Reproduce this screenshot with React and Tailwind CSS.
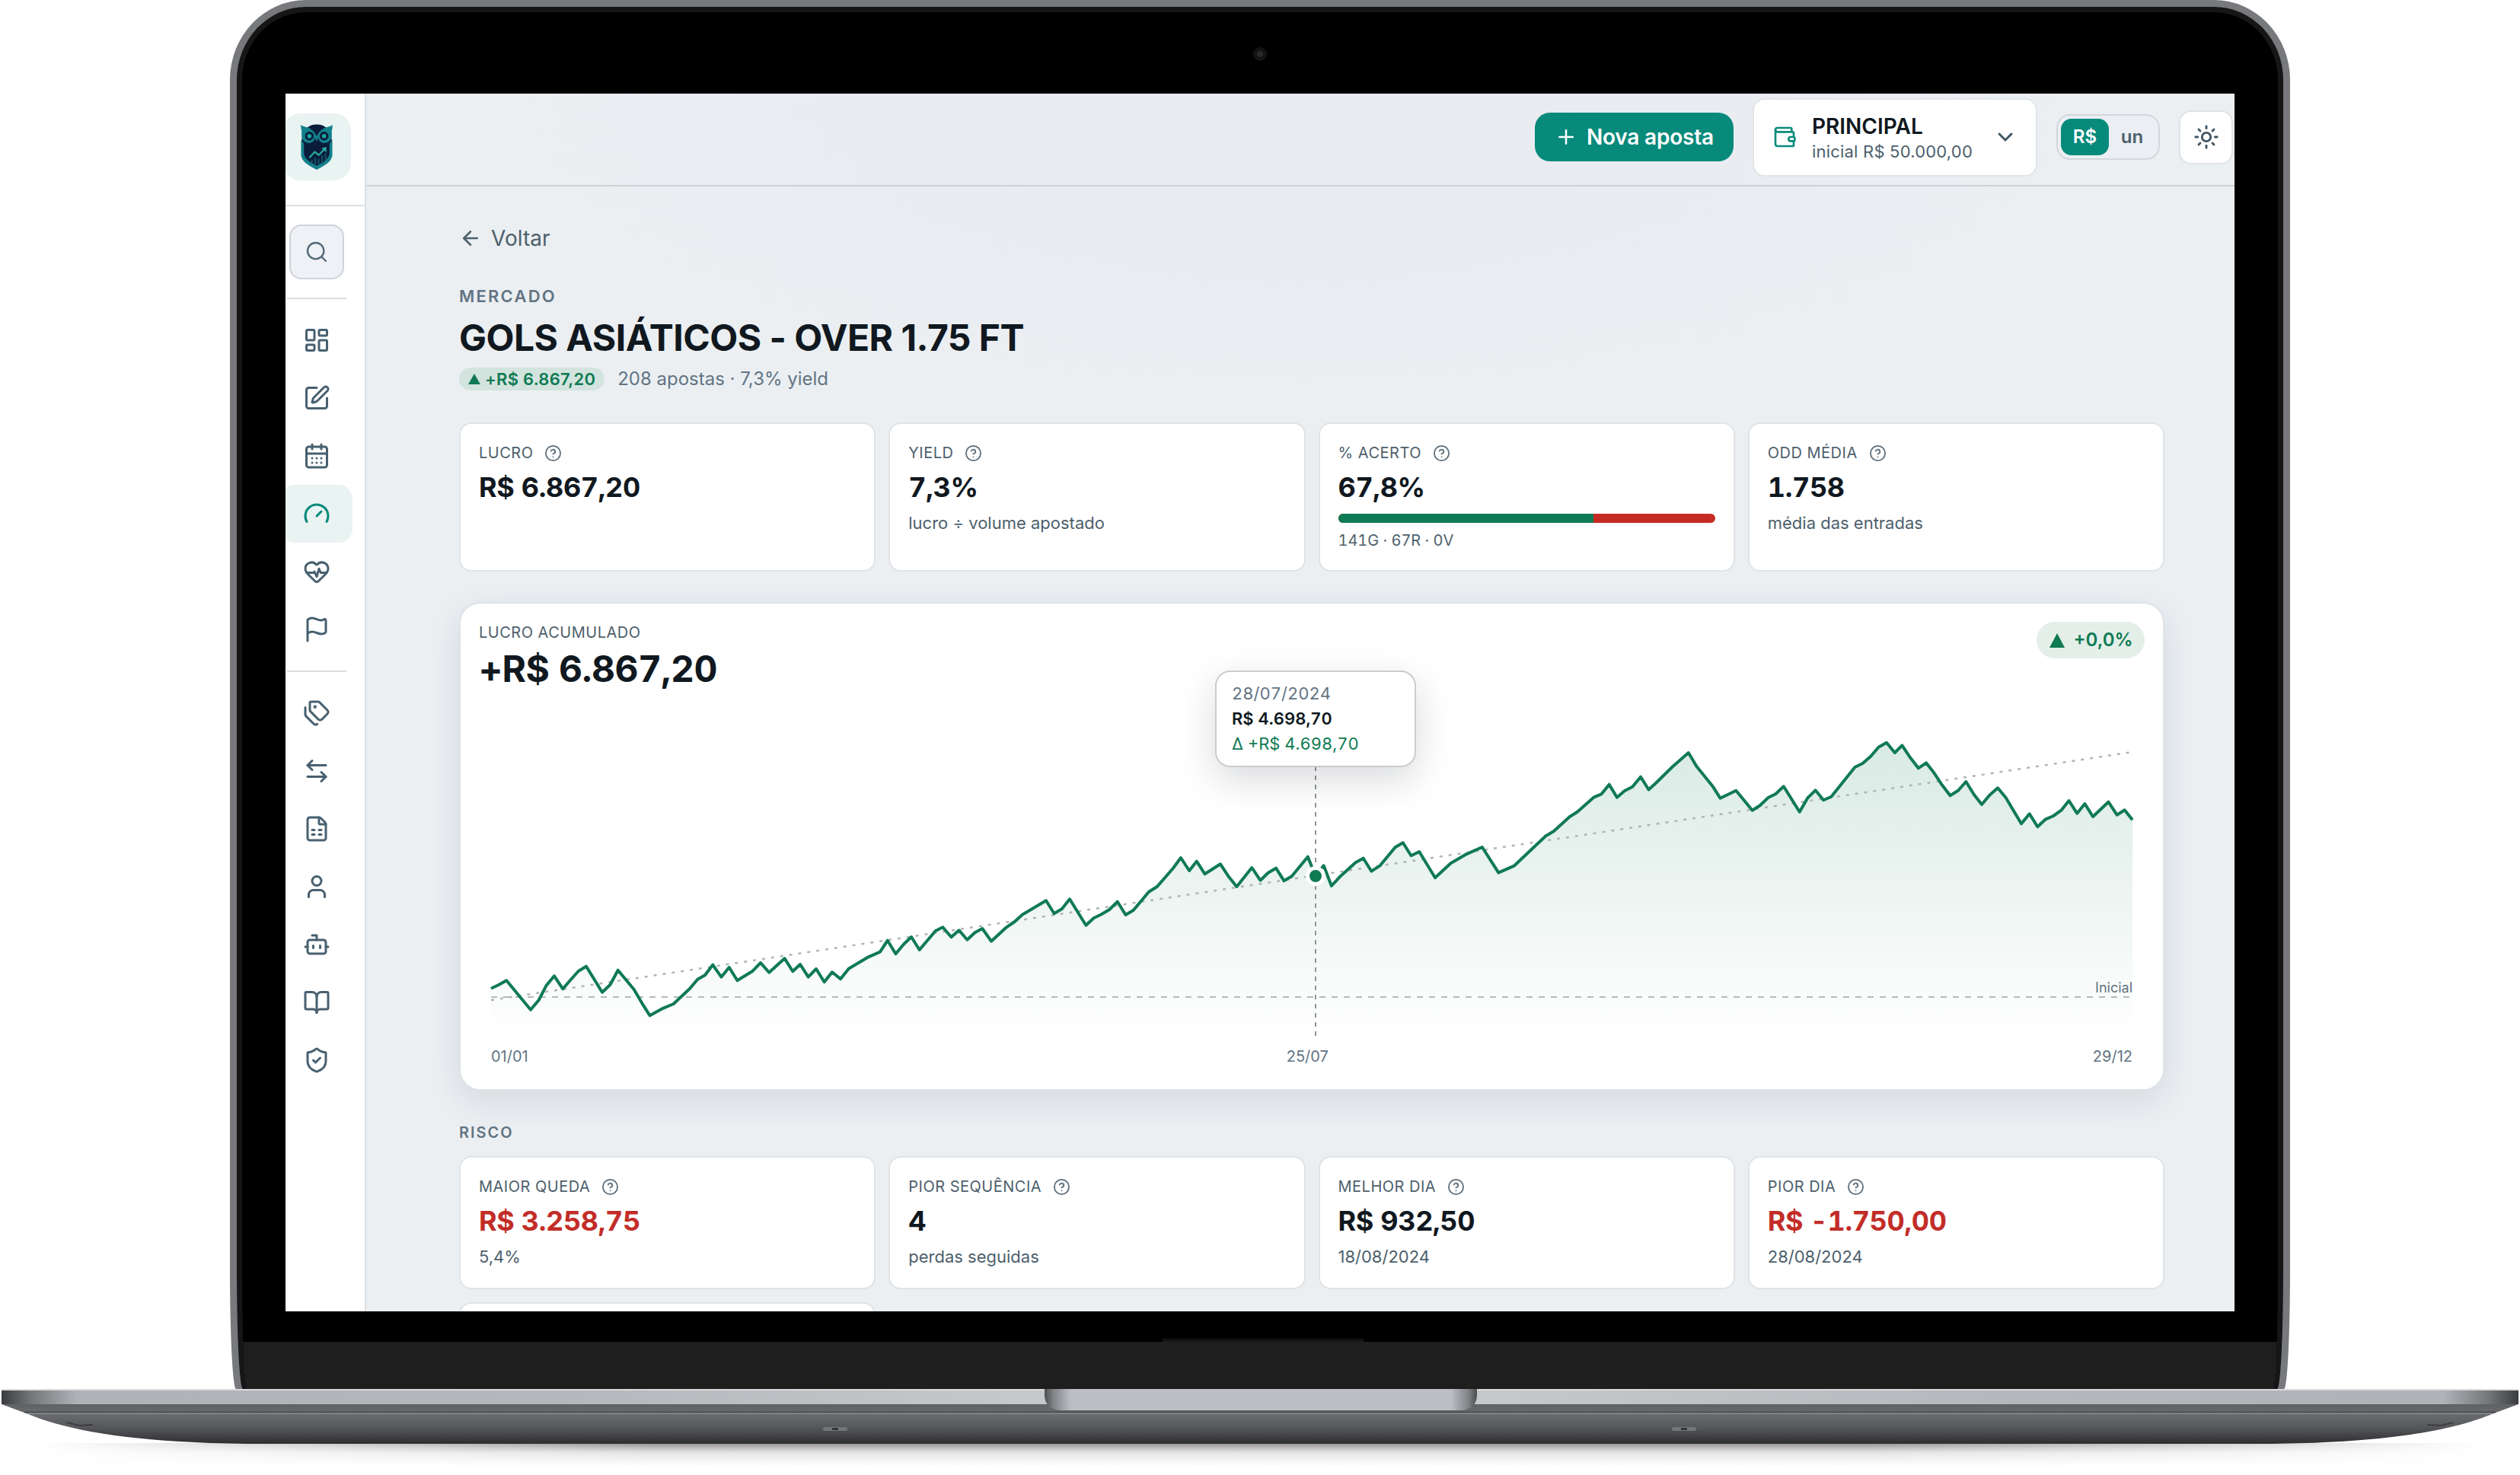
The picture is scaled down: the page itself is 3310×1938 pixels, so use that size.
import React from "react";
import {
  ArrowLeft,
  ArrowLeftRight,
  BookOpen,
  Bot,
  CalendarDays,
  ChevronDown,
  CircleQuestionMark,
  FileSpreadsheet,
  Flag,
  Gauge,
  HeartPulse,
  LayoutDashboard,
  Plus,
  Search,
  ShieldCheck,
  SquarePen,
  Sun,
  Tags,
  User,
  Wallet,
} from "lucide-react";

const mainNav = [
  { id: "dashboard", icon: LayoutDashboard },
  { id: "apostas", icon: SquarePen },
  { id: "calendario", icon: CalendarDays },
  { id: "desempenho", icon: Gauge, active: true },
  { id: "saude", icon: HeartPulse },
  { id: "metas", icon: Flag },
];

const secondaryNav = [
  { id: "tags", icon: Tags },
  { id: "transacoes", icon: ArrowLeftRight },
  { id: "planilhas", icon: FileSpreadsheet },
  { id: "perfil", icon: User },
  { id: "bot", icon: Bot },
  { id: "guia", icon: BookOpen },
  { id: "seguranca", icon: ShieldCheck },
];

// Accumulated profit, in chart pixels (2156 x 450)
const profitPoints = [
  [0, 387.7], [10, 383], [20.3, 377.3], [52, 415.7], [62.7, 403], [72.3, 384.3],
  [83, 371.3], [94.3, 388.3], [104, 377], [114.7, 365], [125, 358.7], [146, 392.7],
  [156.5, 382.7], [166.7, 363.7], [187.7, 389], [198.4, 407.3], [208.6, 423.3],
  [224, 414.7], [239.7, 408], [261, 388], [271.3, 375.7], [281, 370.3],
  [291.2, 356.7], [302.4, 372.7], [312.7, 360], [323.4, 377.3], [343.8, 364.7],
  [354, 354], [365.2, 366.7], [385.6, 348.3], [396.3, 365.3], [406, 356],
  [416.7, 372.7], [427, 362], [437.7, 379.3], [448, 366.3], [459, 375.3],
  [469.8, 361.7], [495.8, 346.3], [511, 339.7], [520.8, 324.7], [531.5, 342.3],
  [541.7, 330], [552, 320], [562.7, 337], [583.6, 312.3], [593.3, 307.3],
  [604.5, 320.3], [614.7, 311.3], [625.4, 323.7], [635.6, 314.3], [645.3, 309],
  [657, 325.7], [677, 307.3], [687.7, 300], [697.9, 290.7], [729, 272.3],
  [739.6, 289.3], [749.8, 283.3], [760, 270.3], [781.4, 304.7], [791.6, 295.3],
  [801.8, 290.3], [812, 284.3], [822.8, 273.7], [833.5, 291], [843.7, 285],
  [864, 260.7], [874.8, 254], [895.7, 230], [906, 216], [917.1, 233],
  [926.8, 220.7], [937.6, 237.3], [958, 224.3], [969.2, 241.3], [979.4, 254],
  [999.3, 229], [1010.5, 245.7], [1020.7, 235.7], [1031, 229.7], [1041.6, 246.3],
  [1051.8, 240.3], [1072.8, 214.7], [1083, 240], [1093.7, 226.3], [1103.9, 253],
  [1114.6, 241.3], [1135.5, 222.3], [1145.7, 216.7], [1156.4, 233.7],
  [1167.7, 226.3], [1187.6, 202.3], [1197.8, 196.3], [1208.5, 213.3],
  [1219.2, 208], [1240, 242.3], [1260.5, 223.3], [1281, 211.3], [1301.8, 202],
  [1323.3, 235.7], [1343.7, 226.7], [1367.7, 204], [1385.5, 187.3],
  [1395.7, 181.3], [1416.6, 162.3], [1426.8, 155.7], [1448.3, 136.7],
  [1458.5, 132.3], [1468.7, 119.7], [1478.9, 136.7], [1489, 128], [1499.3, 122.7],
  [1510, 109.7], [1520.5, 126.5], [1530.1, 117.7], [1541.3, 106.7],
  [1552, 96.3], [1572.8, 78], [1583.5, 96], [1594.6, 109.7], [1604.3, 121.7],
  [1614.5, 137.7], [1625, 132.7], [1635.3, 127.7], [1656.6, 153.7],
  [1666.8, 147.3], [1677.5, 137], [1687.2, 132.3], [1697.8, 122.3],
  [1718.7, 155.7], [1729.4, 137.3], [1739.5, 127.3], [1750.2, 140.3],
  [1760.4, 135.7], [1791.4, 97], [1801.6, 92], [1812.2, 82.7], [1822.4, 70.7],
  [1833, 64.7], [1843.8, 78], [1853.4, 68.3], [1864, 84.3], [1874.8, 98.3],
  [1885, 91.3], [1895, 104], [1905.8, 120.3], [1916.5, 134.3], [1927, 127.7],
  [1937.3, 116], [1948, 133.3], [1958, 146], [1968.3, 133.7], [1979, 124.3],
  [1989.6, 137], [2010, 171.3], [2020.7, 158.3], [2031.3, 175.3], [2041.5, 165.7],
  [2052.2, 161], [2062.4, 153.7], [2072.5, 141], [2083.2, 157.7], [2093.4, 145],
  [2104, 162], [2124.4, 142.7], [2135.6, 159.7], [2145.7, 153.3], [2156, 166.3],
];

const linePath = "M" + profitPoints.map(([x, y]) => `${x} ${y}`).join("L");
const areaPath = `${linePath}L2156 450L0 450Z`;

const OwlLogo = () => (
  <svg width="42" height="60" viewBox="0 0 41 59" className="shrink-0">
    {/* Head */}
    <path
      d="M20.500 0.500C13 0.500 8 4 5 8L1 20V41C3 50 12 54 20.500 58.500C29 54 38 50 40 41V20L36 8C33 4 28 0.500 20.500 0.500Z"
      fill="#0a1c3a"
    />
    {/* Horns and brows */}
    <path
      d="M0.300 0.500C2 4 8 3 12 6C16 8.500 19 12 20.500 16C22 12 25 8.500 29 6C33 3 39 4 40.700 0.500C41.200 5 40.500 9 38 11C34 8 29 8 26 11.500C23.500 14.500 22.500 19 20.500 22.500C18.500 19 17.500 14.500 15 11.500C12 8 7 8 3 11C0.500 9 -0.200 5 0.300 0.500Z"
      fill="#13808a"
    />
    {/* Eyes */}
    <path
      d="M1 9C7 6 15 8 18 15C19 19 17 23.500 12 24.500C7 25 2 22 1 17ZM40 9C34 6 26 8 23 15C22 19 24 23.500 29 24.500C34 25 39 22 40 17Z"
      fill="#13808a"
    />
    <ellipse cx="11" cy="15.500" rx="5.600" ry="5.600" fill="#0a1c3a" />
    <ellipse cx="30" cy="15.500" rx="5.600" ry="5.600" fill="#0a1c3a" />
    <circle cx="11" cy="15.500" r="2.800" fill="#1fa39b" />
    <circle cx="30" cy="15.500" r="2.800" fill="#1fa39b" />
    {/* Shield */}
    <path
      d="M0.300 21L4 25V39C6.500 47 14 50 20.500 54C27 50 34.500 47 37 39V25L40.700 21V41C38.500 50.500 29 54 20.500 59C12 54 2.500 50.500 0.300 41Z"
      fill="#13808a"
    />
    <path d="M14 51V46M18.500 53V43M23 53V45M27.500 51V40M32 47V37" stroke="#0f4a63" strokeWidth="2.400" />
    <path d="M11 43.500L18 36L23 40L31 32" fill="none" stroke="#2aa79e" strokeWidth="2.200" />
    <path d="M26.500 31.200L33 29.500V36.500Z" fill="#2aa79e" />
  </svg>
);

const NavItem = ({ icon: Icon, active }) => (
  <div
    className={`flex h-[76px] w-[94px] shrink-0 items-center justify-center rounded-[18px] ${
      active ? "bg-[#e8f3f2] text-[#0a8a7c]" : "text-[#486070]"
    }`}
  >
    <Icon size={36} strokeWidth={2} />
  </div>
);

const Sidebar = () => (
  <aside className="flex w-[106px] shrink-0 flex-col border-r-2 border-[#dcdfe2] bg-white">
    <div className="h-[148px] shrink-0 border-b-2 border-[#dcdfe2] pt-[26px]">
      <div className="flex w-[82px] justify-center">
        <div className="flex h-[88px] w-[89px] shrink-0 items-center justify-center rounded-[22px] bg-[#e8f3f2]">
          <OwlLogo />
        </div>
      </div>
    </div>
    <div className="flex w-[82px] flex-col items-center">
      <div className="mt-6 flex size-[72px] items-center justify-center rounded-[16px] border-2 border-[#cfd3d8] bg-[#eef1f5] text-[#566b79]">
        <Search size={32} strokeWidth={1.8} />
      </div>
      <div className="mt-6 h-0.5 w-[78px] bg-[#d9dce0]" />
      <nav className="mt-4 flex flex-col items-center">
        {mainNav.map((item) => (
          <NavItem key={item.id} icon={item.icon} active={item.active} />
        ))}
      </nav>
      <div className="mt-4 h-0.5 w-[78px] bg-[#d9dce0]" />
      <nav className="mt-4 flex flex-col items-center">
        {secondaryNav.map((item) => (
          <NavItem key={item.id} icon={item.icon} />
        ))}
      </nav>
    </div>
  </aside>
);

const Header = () => (
  <header className="flex h-[122px] shrink-0 items-center justify-end gap-[25px] border-b-2 border-[#cdd2d7] pr-0.5 pb-1.5">
    <button className="flex h-16 w-[261px] items-center justify-center gap-3 rounded-[20px] bg-[#088a7b] text-[28px] font-semibold tracking-[-0.2px] text-white">
      <Plus size={30} strokeWidth={2} />
      Nova aposta
    </button>

    <div className="flex h-[103px] w-[374px] items-center rounded-[16px] border-2 border-[#e2e4e7] bg-white px-6">
      <Wallet size={32} strokeWidth={2} className="shrink-0 text-[#0a8a7c]" />
      <div className="ml-5 flex-1 pt-[3px]">
        <div className="text-[28px] leading-[34px] font-semibold text-[#101820]">
          PRINCIPAL
        </div>
        <div className="text-[22px] leading-[32px] tracking-[0.2px] text-[#4d606c]">
          inicial R$ 50.000,00
        </div>
      </div>
      <ChevronDown size={32} strokeWidth={2.2} className="shrink-0 text-[#405563]" />
    </div>

    <div className="flex h-[60px] w-[136px] items-center rounded-[18px] border-2 border-[#d3d7db] bg-[#ebeff3] p-1 text-2xl font-semibold">
      <div className="flex h-12 w-[63px] items-center justify-center rounded-[14px] bg-[#088a7b] text-white">
        R$
      </div>
      <div className="flex flex-1 items-center justify-center text-[#4d606c]">un</div>
    </div>

    <button className="flex size-[71px] items-center justify-center rounded-[16px] border-2 border-[#e0e2e5] bg-white text-[#405563]">
      <Sun size={34} strokeWidth={2} />
    </button>
  </header>
);

const StatCard = ({ label, value, hint, negative, ratio, breakdown }) => (
  <div className="rounded-[16px] border-2 border-[#e0e3e6] bg-white p-6">
    <div className="flex h-7 items-center gap-[15px] text-[20px] tracking-[0.5px] text-[#4d606c]">
      {label}
      <CircleQuestionMark size={23} strokeWidth={1.9} className="text-[#5d6f7c]" />
    </div>
    <div
      className={`mt-[9px] text-[36px] leading-[44px] font-bold tracking-[-0.36px] tabular-nums ${
        negative ? "text-[#c22d28]" : "text-[#101820]"
      }`}
    >
      {value}
    </div>
    {hint && <div className="mt-[9px] text-[22px] leading-[33px] text-[#4d606c]">{hint}</div>}
    {ratio && (
      <>
        <div className="mt-[13px] h-3 overflow-hidden rounded-full bg-[#c62a24]">
          <div className="h-full bg-[#0f7a53]" style={{ width: `${ratio}%` }} />
        </div>
        <div className="mt-2 text-[20px] leading-[30px] tracking-[-0.05px] text-[#4d606c] tabular-nums">
          {breakdown}
        </div>
      </>
    )}
  </div>
);

const ChartTooltip = () => (
  <div className="absolute top-[-30px] left-[951px] h-[127px] w-[264px] rounded-[20px] border-2 border-[#c9cdd1] bg-white px-5 pt-3 text-[22px] leading-[33px] tabular-nums shadow-[0_16px_48px_rgba(16,24,40,0.16)]">
    <div className="text-[#627483]">28/07/2024</div>
    <div className="font-semibold text-[#101820]">R$ 4.698,70</div>
    <div className="text-[#0f7a53]">Δ +R$ 4.698,70</div>
  </div>
);

const ProfitChart = () => (
  <section className="mt-10 h-[642px] rounded-[28px] border-2 border-[#dfe2e6] bg-white p-6 shadow-[0_14px_44px_rgba(30,41,70,0.1)]">
    <div className="flex items-start justify-between">
      <div>
        <div className="text-[20px] leading-7 tracking-[0.5px] text-[#4d606c]">
          LUCRO ACUMULADO
        </div>
        <div className="mt-[5px] text-[48px] leading-[58px] font-bold tracking-[-0.48px] text-[#101820] tabular-nums">
          +R$ 6.867,20
        </div>
      </div>
      <div className="flex h-12 w-[142px] items-center justify-center gap-[11px] rounded-full bg-[#e4efe9] pl-0.5 text-2xl font-semibold text-[#0f7a53]">
        <svg width="20" height="19" viewBox="0 0 20 19">
          <path d="M10 0L20 19H0Z" fill="currentColor" />
        </svg>
        +0,0%
      </div>
    </div>

    <div className="relative mr-[15px] ml-4 mt-[3px]">
      <svg width="2156" height="450" viewBox="0 0 2156 450" className="block overflow-visible">
        <defs>
          <linearGradient id="profitFill" x1="0" y1="60" x2="0" y2="450" gradientUnits="userSpaceOnUse">
            <stop offset="0" stopColor="#0f7a53" stopOpacity="0.16" />
            <stop offset="1" stopColor="#0f7a53" stopOpacity="0" />
          </linearGradient>
        </defs>
        <path d={areaPath} fill="url(#profitFill)" />
        <path d="M0 399H2156" stroke="#b4b9bc" strokeWidth="2" strokeDasharray="8 8" />
        <path d="M0 403L2156 77" stroke="#b0b5b8" strokeWidth="2.500" strokeDasharray="4 8" />
        <path d={linePath} fill="none" stroke="#0f7a53" strokeWidth="4" strokeLinejoin="round" />
        <path d="M1083 96V450" stroke="#8f979c" strokeWidth="2" strokeDasharray="6 6" />
        <circle cx="1083" cy="240" r="10.500" fill="#0f7a53" stroke="#fff" strokeWidth="5" />
        <text x="2156" y="393" textAnchor="end" fontSize="18" fill="#627483">
          Inicial
        </text>
      </svg>
      <ChartTooltip />
    </div>

    <div className="mr-4 ml-4 mt-3 flex justify-between text-[20px] leading-[30px] text-[#627483]">
      <span>01/01</span>
      <span className="-translate-x-1">25/07</span>
      <span>29/12</span>
    </div>
  </section>
);

const MarketPage = () => (
  <main className="flex-1 pt-[47px] pr-[92px] pl-[122px]">
    <div className="flex h-[42px] items-center gap-3 text-[28px] text-[#4d606c]">
      <ArrowLeft size={30} strokeWidth={2} />
      Voltar
    </div>

    <div className="mt-[39px] text-[22px] leading-[33px] font-semibold tracking-[2.2px] text-[#627483]">
      MERCADO
    </div>
    <h1 className="mt-[9px] text-[48px] leading-[58px] font-bold tracking-[-0.53px] text-[#101820]">
      GOLS ASIÁTICOS - OVER 1.75 FT
    </h1>
    <div className="mt-2.5 flex h-[30px] items-center gap-[17px]">
      <div className="flex h-[30px] items-center gap-1.5 rounded-full bg-[#d3e4df] px-3 text-[22px] font-semibold tracking-[0.25px] text-[#0f7a53]">
        <svg width="16" height="14" viewBox="0 0 16 14">
          <path d="M8 0L16 14H0Z" fill="currentColor" />
        </svg>
        +R$ 6.867,20
      </div>
      <span className="text-[24px] text-[#627483]">208 apostas · 7,3% yield</span>
    </div>

    <div className="mt-[42px] grid grid-cols-4 gap-[17px]">
      <StatCard label="LUCRO" value="R$ 6.867,20" />
      <StatCard label="YIELD" value="7,3%" hint="lucro ÷ volume apostado" />
      <StatCard label="% ACERTO" value="67,8%" ratio={67.8} breakdown="141G · 67R · 0V" />
      <StatCard label="ODD MÉDIA" value="1.758" hint="média das entradas" />
    </div>

    <ProfitChart />

    <div className="mt-10 text-[20px] leading-[30px] font-semibold tracking-[2px] text-[#627483]">
      RISCO
    </div>
    <div className="mt-4 grid grid-cols-4 gap-[17px]">
      <StatCard label="MAIOR QUEDA" value="R$ 3.258,75" hint="5,4%" negative />
      <StatCard label="PIOR SEQUÊNCIA" value="4" hint="perdas seguidas" />
      <StatCard label="MELHOR DIA" value="R$ 932,50" hint="18/08/2024" />
      <StatCard label="PIOR DIA" value="R$ -1.750,00" hint="28/08/2024" negative />
      <div className="h-[175px] rounded-[16px] border-2 border-[#e0e3e6] bg-white" />
    </div>
  </main>
);

// Keyboard half of the laptop, seen edge-on
const LaptopBase = () => (
  <svg width="3310" height="113" viewBox="0 0 3310 113" className="block">
    <defs>
      <linearGradient id="baseTop" x1="2" y1="0" x2="3308" y2="0" gradientUnits="userSpaceOnUse">
        <stop offset="0" stopColor="#3a3c3f" />
        <stop offset="0.012" stopColor="#75777b" />
        <stop offset="0.03" stopColor="#b0b2b7" />
        <stop offset="0.22" stopColor="#b5b7bc" />
        <stop offset="0.4" stopColor="#c6c7cb" />
        <stop offset="0.6" stopColor="#c6c7cb" />
        <stop offset="0.8" stopColor="#b5b7bc" />
        <stop offset="0.97" stopColor="#b0b2b7" />
        <stop offset="0.988" stopColor="#75777b" />
        <stop offset="1" stopColor="#3a3c3f" />
      </linearGradient>
      <linearGradient id="baseBottom" x1="0" y1="20" x2="0" y2="72" gradientUnits="userSpaceOnUse">
        <stop offset="0" stopColor="#5f6165" />
        <stop offset="0.25" stopColor="#6a6c70" />
        <stop offset="0.6" stopColor="#55565a" />
        <stop offset="1" stopColor="#2e2e31" />
      </linearGradient>
      <linearGradient id="thumbNotch" x1="1372" y1="0" x2="1940" y2="0" gradientUnits="userSpaceOnUse">
        <stop offset="0" stopColor="#4c4d50" />
        <stop offset="0.02" stopColor="#808286" />
        <stop offset="0.06" stopColor="#bcbec4" />
        <stop offset="0.94" stopColor="#bcbec4" />
        <stop offset="0.98" stopColor="#808286" />
        <stop offset="1" stopColor="#4c4d50" />
      </linearGradient>
      <linearGradient id="floorShadow" x1="0" y1="72" x2="0" y2="102" gradientUnits="userSpaceOnUse">
        <stop offset="0" stopColor="#6f686c" stopOpacity="0.7" />
        <stop offset="0.4" stopColor="#8a8688" stopOpacity="0.22" />
        <stop offset="1" stopColor="#a0a0a0" stopOpacity="0" />
      </linearGradient>
      <linearGradient id="shadowFade" x1="50" y1="0" x2="3260" y2="0" gradientUnits="userSpaceOnUse">
        <stop offset="0" stopColor="#fff" stopOpacity="0" />
        <stop offset="0.25" stopColor="#fff" />
        <stop offset="0.75" stopColor="#fff" />
        <stop offset="1" stopColor="#fff" stopOpacity="0" />
      </linearGradient>
      <mask id="shadowMask">
        <rect x="0" y="50" width="3310" height="63" fill="url(#shadowFade)" />
      </mask>
    </defs>
    <rect x="50" y="71" width="3210" height="32" fill="url(#floorShadow)" mask="url(#shadowMask)" />
    <path
      d="M2 20L37 33C90 55 180 72 350 72H2960C3130 72 3220 55 3273 33L3308 20Z"
      fill="url(#baseBottom)"
    />
    <path d="M32 30.500H3278" stroke="#3f4043" strokeWidth="1.500" />
    <path d="M36 32H3274" stroke="#8b8d91" strokeWidth="1.500" />
    <rect x="2" y="0" width="3306" height="20" fill="url(#baseTop)" />
    <rect x="2" y="0" width="3306" height="2" fill="#d9dadc" />
    <path d="M1372 0H1940V8C1940 20 1932 28 1918 28H1394C1380 28 1372 20 1372 8Z" fill="url(#thumbNotch)" />
    {[1097, 2212].map((x) => (
      <g key={x}>
        <rect x={x - 16} y="50" width="32" height="5" rx="2.500" fill="#737578" />
        <rect x={x - 4} y="51" width="8" height="3" fill="#333437" />
      </g>
    ))}
    <path d="M88 44L104 48L122 47" fill="none" stroke="#3d3e41" strokeWidth="2" />
    <path d="M3222 44L3206 48L3188 47" fill="none" stroke="#3d3e41" strokeWidth="2" />
  </svg>
);

const App = () => {
  return (
    <div className="h-[1938px] w-[3310px] overflow-hidden bg-white font-['Inter',sans-serif]">
      {/* Lid */}
      <div className="mx-auto h-[1825px] w-[2706px] rounded-[100px_100px_8px_8px/105px_105px_160px_160px] bg-[#77797c] p-[9px] pb-0">
        <div className="h-full rounded-[91px_91px_8px_8px/96px_96px_160px_160px] bg-[#161616] p-[7px] pb-0">
          <div className="flex h-full flex-col items-center overflow-hidden rounded-[84px_84px_6px_6px/89px_89px_160px_160px] bg-black">
            <div className="flex h-[107px] shrink-0 items-center justify-center pt-0.5">
              <div className="flex size-[18px] items-center justify-center rounded-full bg-[#131313]">
                <div className="size-2 rounded-full bg-[#26282c]" />
              </div>
            </div>

            {/* Screen */}
            <div className="flex h-[1600px] w-[2560px] shrink-0 overflow-hidden bg-[#ebeff2]">
              <Sidebar />
              <div className="flex min-w-0 flex-1 flex-col bg-[radial-gradient(ellipse_1050px_400px_at_50%_0%,#e9ebf0_0%,#e9ecf1_60%,#ebeff2_100%)]">
                <Header />
                <MarketPage />
              </div>
            </div>

            <div className="mt-[35px] ml-2 h-[5px] w-[264px] shrink-0 bg-linear-to-b from-[#080808] to-[#1c1c1c]" />
            <div className="w-full flex-1 bg-[#1e1e1e]" />
          </div>
        </div>
      </div>
      <LaptopBase />
    </div>
  );
};

export default App;
